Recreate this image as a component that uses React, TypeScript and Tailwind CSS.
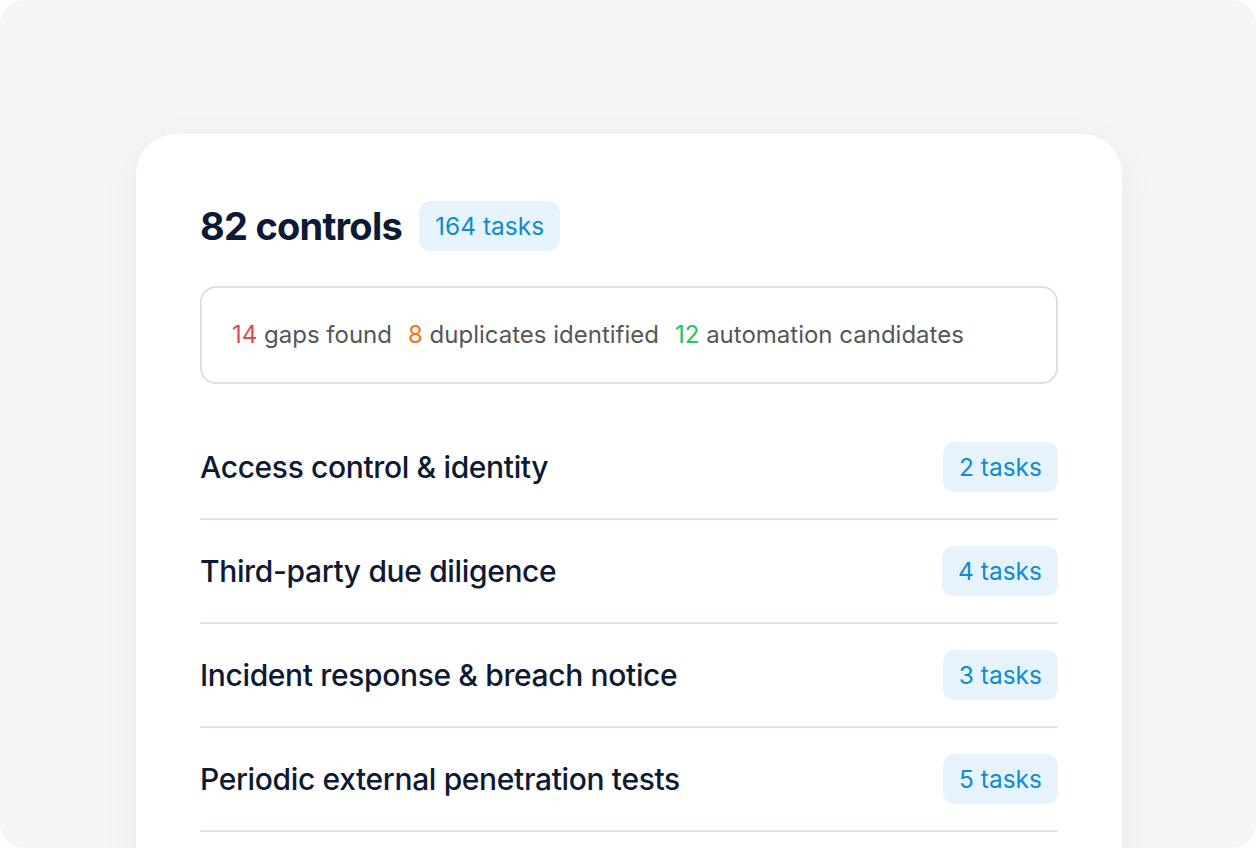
const rows = [
  { title: "Access control & identity", tasks: 2 },
  { title: "Third-party due diligence", tasks: 4 },
  { title: "Incident response & breach notice", tasks: 3 },
  { title: "Periodic external penetration tests", tasks: 5 },
];

function TaskBadge({ count }: { count: number }) {
  return (
    <span className="inline-flex h-[50px] items-center rounded-xl bg-[#e6f3fc] px-4 text-[24.5px] text-[#0f8bd4]">
      {count} tasks
    </span>
  );
}

export default function App() {
  return (
    <div className="h-[848px] w-[1256px] overflow-hidden bg-white font-['Inter',sans-serif]">
      <div className="h-full w-full overflow-hidden rounded-3xl bg-[#f4f5f7] pl-[136px] pt-[134px]">
        <div className="h-[800px] w-[986px] rounded-[40px] bg-white px-16 pt-16 shadow-[0_10px_40px_rgba(15,23,42,0.05)]">
          <div className="flex h-14 items-center gap-[17px]">
            <h1 className="text-[38px] font-bold tracking-[-0.02em] text-[#0e1a33]">
              82 controls
            </h1>
            <TaskBadge count={164} />
          </div>

          <div className="mt-8 flex items-center gap-4 rounded-2xl border-2 border-[#dcdfe4] px-[30px] py-[30px] text-[24px] leading-[34px] text-[#555659]">
            <span>
              <span className="text-[#e5484d]">14</span> gaps found
            </span>
            <span>
              <span className="text-[#f97316]">8</span> duplicates identified
            </span>
            <span>
              <span className="text-[#22c55e]">12</span> automation candidates
            </span>
          </div>

          <ul className="mt-8">
            {rows.map((r) => (
              <li
                key={r.title}
                className="flex h-[104px] items-center justify-between border-b-2 border-[#e3e6ef]"
              >
                <span className="text-[30px] font-medium tracking-[-0.012em] text-[#0e1a33]">
                  {r.title}
                </span>
                <TaskBadge count={r.tasks} />
              </li>
            ))}
          </ul>
        </div>
      </div>
    </div>
  );
}
